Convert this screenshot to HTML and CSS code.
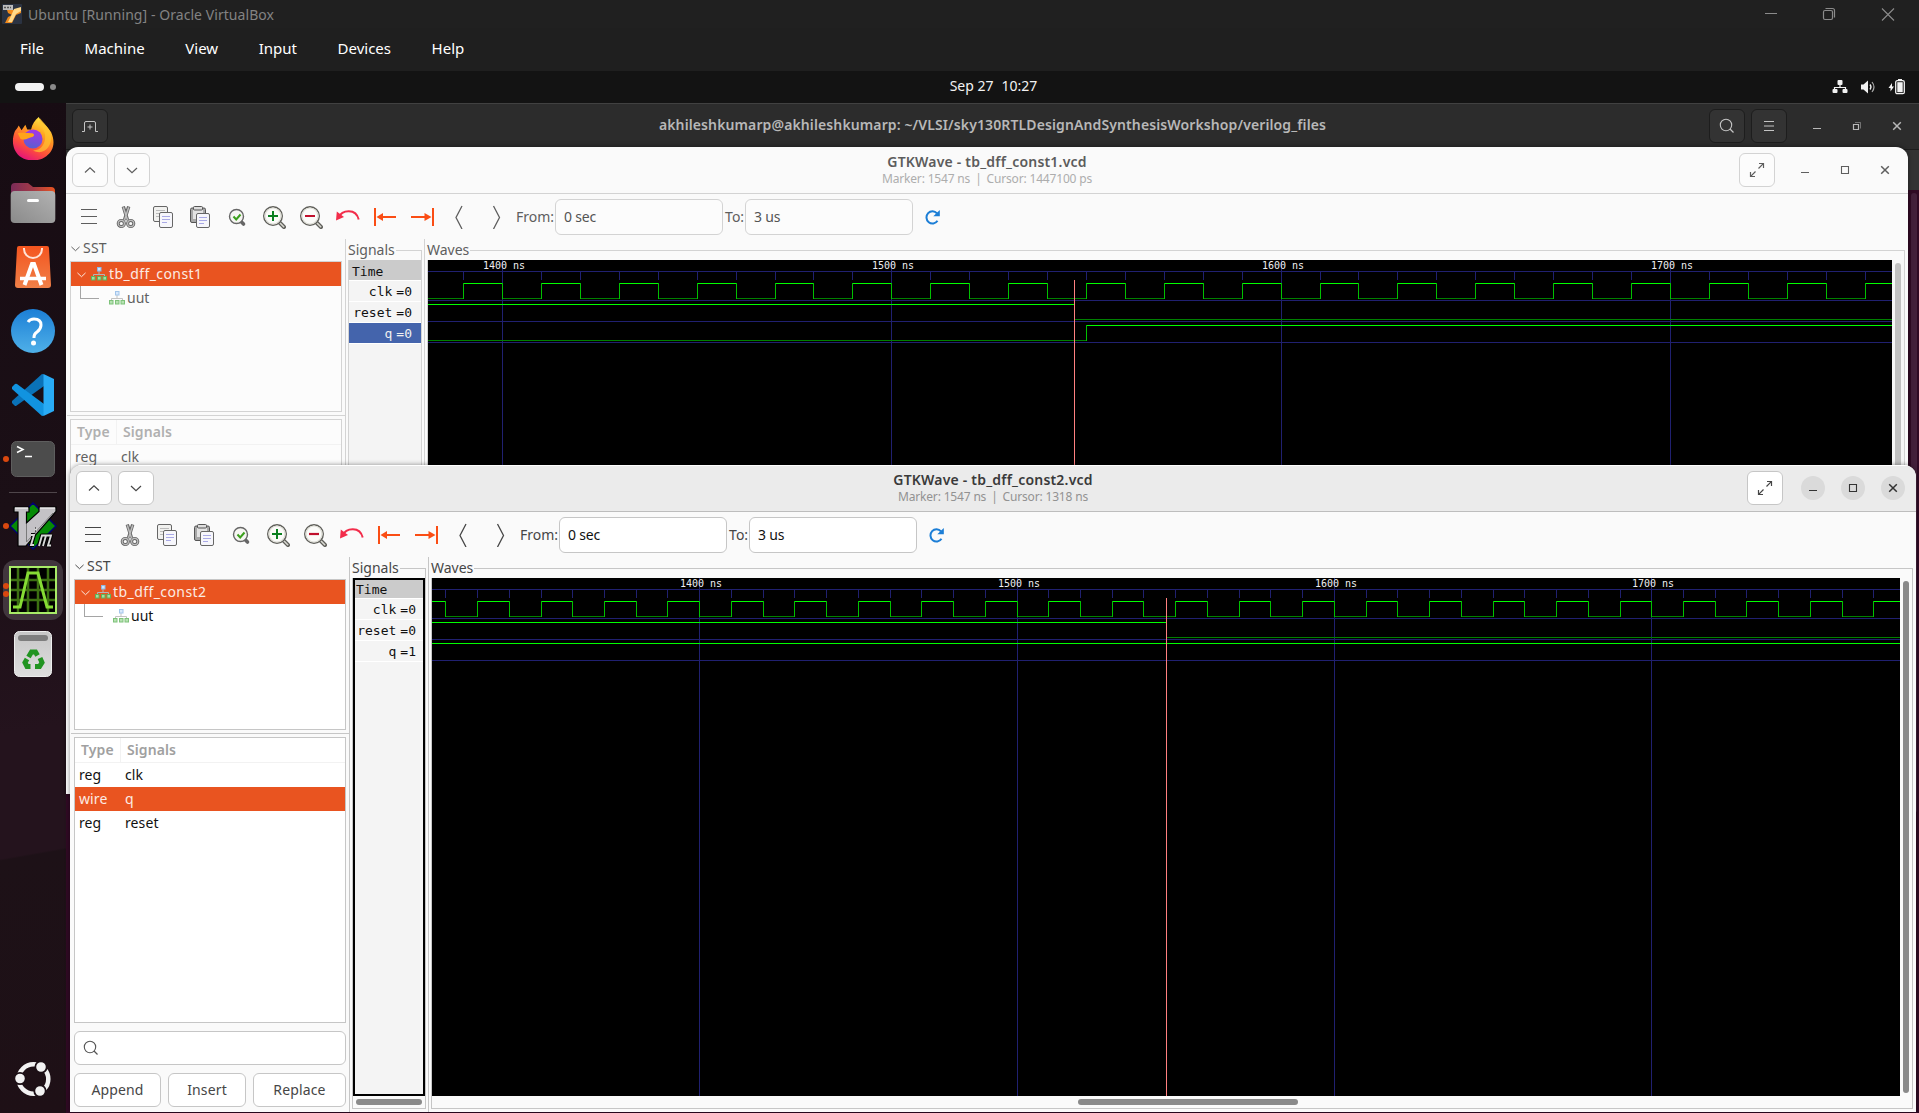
FILE: index.html
```html
<!DOCTYPE html>
<html lang="en">
<head>
<meta charset="utf-8">
<title>Ubuntu [Running] - Oracle VirtualBox</title>
<link rel="stylesheet" href="styles.css">
</head>
<body>
<svg class="defs" aria-hidden="true">
  <defs>
    <linearGradient id="ff-body" x1=".8" y1="0" x2=".3" y2="1"><stop offset="0" stop-color="#fff44f"/><stop offset=".35" stop-color="#ffa41f"/><stop offset=".7" stop-color="#ff4f3a"/><stop offset="1" stop-color="#e3127c"/></linearGradient>
    <linearGradient id="ff-globe" x1=".6" y1="0" x2=".4" y2="1"><stop offset="0" stop-color="#a634e8"/><stop offset="1" stop-color="#5a5fd0"/></linearGradient>
    <linearGradient id="folder-back" x1="0" y1="0" x2="1" y2="0"><stop offset="0" stop-color="#7b2b58"/><stop offset=".5" stop-color="#a23a48"/><stop offset="1" stop-color="#e95420"/></linearGradient>
    <linearGradient id="grey" x1="0" y1="1" x2="1" y2="0"><stop offset="0" stop-color="#8a8a8a"/><stop offset="1" stop-color="#b2b2b2"/></linearGradient>
    <linearGradient id="bag" x1="0" y1="0" x2="0" y2="1"><stop offset="0" stop-color="#f4551f"/><stop offset="1" stop-color="#f08048"/></linearGradient>
    <linearGradient id="blue" x1="0" y1="0" x2="0" y2="1"><stop offset="0" stop-color="#1c7fd6"/><stop offset="1" stop-color="#4fb0e8"/></linearGradient>
    <linearGradient id="can" x1="0" y1="0" x2="0" y2="1"><stop offset="0" stop-color="#c6c6c6"/><stop offset="1" stop-color="#dedede"/></linearGradient>
  </defs>
  <symbol id="i-up" viewBox="0 0 16 16"><path d="M3 10.500 8 5.800l5 4.700" fill="none" stroke="currentColor" stroke-width="1.200"/></symbol>
  <symbol id="i-down" viewBox="0 0 16 16"><path d="M3 6l5 4.700L13 6" fill="none" stroke="currentColor" stroke-width="1.200"/></symbol>
  <symbol id="i-expand" viewBox="0 0 16 16"><path d="M9.500 6.500 14.300 1.700M10 1.500h4.500v4.500M6.500 9.500 1.700 14.300M1.500 10v4.500h4.500" fill="none" stroke="currentColor" stroke-width="1.200"/></symbol>
  <symbol id="i-min" viewBox="0 0 16 16"><path d="M4 10.500h8" stroke="currentColor"/></symbol>
  <symbol id="i-max" viewBox="0 0 16 16"><path d="M4.500 4.500h7v7h-7z" fill="none" stroke="currentColor" stroke-width="1.100"/></symbol>
  <symbol id="i-close" viewBox="0 0 16 16"><path d="M4.200 4.200l7.600 7.600M11.800 4.200l-7.600 7.600" stroke="currentColor" stroke-width="1.500"/></symbol>
  <symbol id="i-restore" viewBox="0 0 16 16"><path d="M4.500 6.500h5v5h-5z" fill="none" stroke="currentColor" stroke-width="1.200"/><path d="M6 4.500h5.500v6" fill="none" stroke="currentColor" opacity=".5"/></symbol>
  <symbol id="i-search" viewBox="0 0 16 16"><circle cx="7" cy="7" r="5.700" fill="none" stroke="currentColor" stroke-width="1.100"/><path d="M11 11l3.500 3.500" stroke="currentColor" stroke-width="1.300"/></symbol>
  <symbol id="i-newtab" viewBox="0 0 16 16"><path d="M0 13.500h2.500V5q0-1.500 1.500-1.500h8q1.500 0 1.500 1.500v8.500H16M8 6.500v5M5.500 9h5" fill="none" stroke="currentColor"/></symbol>
  <symbol id="i-burger" viewBox="0 0 16 16"><path d="M3 3.500h10M3 8h10M3 12.500h10" stroke="currentColor" stroke-width="1.100"/></symbol>

  <symbol id="t-menu" viewBox="0 0 24 24"><path d="M4 4.500h16M4 11.500h16M4 18.500h16" stroke="currentColor" stroke-width="1.200"/></symbol>
  <symbol id="t-cut" viewBox="0 0 24 24"><g fill="none"><path d="M9.300 1.500 13.500 15M14.700 1.500 10.500 15" stroke="#666" stroke-width="3.400"/><path d="M9.300 2.300 13.500 15M14.700 2.300 10.500 15" stroke="#bdbdbd" stroke-width="1.500"/><circle cx="7.300" cy="18.500" r="3.100" stroke="#666" stroke-width="3"/><circle cx="16.700" cy="18.500" r="3.100" stroke="#666" stroke-width="3"/><circle cx="7.300" cy="18.500" r="3.100" stroke="#bdbdbd" stroke-width="1.200"/><circle cx="16.700" cy="18.500" r="3.100" stroke="#bdbdbd" stroke-width="1.200"/></g></symbol>
  <symbol id="t-copy" viewBox="0 0 24 24"><rect x="2.500" y="1.500" width="14" height="15" rx="1.500" fill="#f1f1ef" stroke="#666"/><path d="M5 5.500h9M5 8.500h4M5 11.500h3" stroke="#bbb"/><rect x="8.500" y="7.500" width="13" height="15" rx="1.500" fill="#f6f6fb" stroke="#666"/><path d="M11 11.500h8M11 14.500h8M11 17.500h5" stroke="#a9a9e6"/></symbol>
  <symbol id="t-paste" viewBox="0 0 24 24"><rect x="2.500" y="3" width="15" height="14.500" rx="1.500" fill="#a8a8a8" stroke="#555"/><rect x="5" y="5" width="10" height="9" fill="#e3e3e3"/><rect x="5.500" y="1.500" width="9" height="3.500" rx="1" fill="#ddd" stroke="#555"/><rect x="8.500" y="8.500" width="13" height="14" rx="1.500" fill="#f6f6fb" stroke="#666"/><path d="M11 12.500h8M11 15.500h8M11 18.500h5" stroke="#a9a9e6"/></symbol>
  <symbol id="t-fit" viewBox="0 0 24 24"><path d="M15.500 16 18.500 19" stroke="#666" stroke-width="3.600" stroke-linecap="round"/><circle cx="11.500" cy="11.500" r="7" fill="#f6f6f2" stroke="#666" stroke-width="1.400"/><path d="M8.500 11.500l2.700 3 4.300-5" fill="none" stroke="#3ba01c" stroke-width="2"/></symbol>
  <symbol id="t-glass" viewBox="0 0 24 24"><path d="M17.500 17.500l4.500 4.500" stroke="#5f5f5a" stroke-width="4" stroke-linecap="round"/><path d="M18 18l3.700 3.700" stroke="#d9d9d2" stroke-width="1.600" stroke-linecap="round"/><circle cx="11" cy="11" r="9.300" fill="#fbfbf9" stroke="#5f5f5a" stroke-width="1.400"/><circle cx="11" cy="11" r="8" fill="none" stroke="#deded6" stroke-width="1.200"/></symbol>
  <symbol id="t-in" viewBox="0 0 24 24"><use href="#t-glass"/><path d="M6 11h10M11 6v10" stroke="#0b8020" stroke-width="2"/></symbol>
  <symbol id="t-out" viewBox="0 0 24 24"><use href="#t-glass"/><path d="M6 11h10" stroke="#c0102c" stroke-width="2.200"/></symbol>
  <symbol id="t-undo" viewBox="0 0 24 24"><path d="M2.500 12.500C6 4.500 20 3 22.700 14.500" fill="none" stroke="#f22c4a" stroke-width="2"/><path d="M0 15.500.800 6.500 8 12z" fill="#f22c4a"/></symbol>
  <symbol id="t-first" viewBox="0 0 24 24"><path d="M2 3v18" stroke="#fa4d14" stroke-width="2"/><path d="M8 12h15" stroke="#fa4d14" stroke-width="2"/><path d="M3.500 12l6.500-4v8z" fill="#fa4d14"/></symbol>
  <symbol id="t-last" viewBox="0 0 24 24"><path d="M23 3v18" stroke="#fa4d14" stroke-width="2"/><path d="M1 12h15" stroke="#fa4d14" stroke-width="2"/><path d="M21.500 12l-7-4v8z" fill="#fa4d14"/></symbol>
  <symbol id="t-prev" viewBox="0 0 24 24"><path d="M15 1 9 12.500 15 24" fill="none" stroke="currentColor" stroke-width="1.300"/></symbol>
  <symbol id="t-next" viewBox="0 0 24 24"><path d="M9.500 1l6 11.500-6 11.500" fill="none" stroke="currentColor" stroke-width="1.300"/></symbol>
  <symbol id="t-reload" viewBox="0 0 16 16"><path d="M13 4.300A6 6.200 0 1 0 13.500 11.800" fill="none" stroke="#1c7ed6" stroke-width="2"/><path d="M15.800 1v6.300H9.300z" fill="#1c7ed6"/></symbol>
  <symbol id="i-module" viewBox="0 0 16 14"><path d="M8 4v3.500M2.500 10V7.500h11V10" fill="none" stroke="#b5b5b5"/><rect x="6.500" y=".5" width="3.500" height="3.500" fill="#cfe4fb" stroke="#8cb8e8"/><g fill="#a6dca0" stroke="#5fb45a"><rect x=".5" y="9.500" width="3.500" height="3.500"/><rect x="6.500" y="9.500" width="3.500" height="3.500"/><rect x="12" y="9.500" width="3.500" height="3.500"/></g></symbol>
</svg>

<header class="vm-title">
  <svg class="vm-logo" viewBox="0 0 20 20"><rect width="20" height="20" rx="1" fill="#2b3342"/><path d="M5 6h7l7-2v5l-5 2-4 8H3l3-6 4-2-4-2z" fill="#f08a1c"/><path d="M12 5l7-2v4l-5 3-4 8H6l3-6z" fill="#ffd98a"/><rect x="1" y="1" width="10" height="5" fill="#bcbcbc"/><path d="M2 3.500h7" stroke="#555" stroke-width="1.500" stroke-dasharray="2 1"/></svg>
  <span class="vm-name">Ubuntu [Running] - Oracle VirtualBox</span>
  <svg class="vm-controls" viewBox="0 0 132 14"><g fill="none" stroke="#8b8b8b"><path d="M1 6.500h12"/><path d="M59.500 5q0-1.500 1.500-1.500h6q1.500 0 1.500 1.500v6q0 1.500-1.500 1.500h-6q-1.500 0-1.500-1.500zM61.500 1.500h7q2 0 2 2v7" stroke-width="1.200"/><path d="M118 1.500l12 12M130 1.500l-12 12" stroke-width="1.100"/></g></svg>
</header>
<nav class="vm-menu"><span>File</span><span>Machine</span><span>View</span><span>Input</span><span>Devices</span><span>Help</span></nav>

<div class="topbar">
  <div class="workspaces"><i class="pill"></i><i class="dot"></i></div>
  <div class="clock"><span>Sep 27</span><span>10:27</span></div>
  <div class="tray">
    <svg width="16" height="16" viewBox="0 0 16 16"><path d="M8 5v4M2.500 11V8.500h11V11" fill="none" stroke="#f2f2f2" stroke-width="1.200"/><g fill="#f2f2f2"><rect x="5.500" y="1" width="5" height="5" rx="1"/><rect x=".5" y="10" width="5" height="4" rx="1"/><rect x="10.500" y="10" width="5" height="4" rx="1"/></g></svg>
    <svg width="16" height="16" viewBox="0 0 16 16"><path d="M1 5.500h2.500L8 1.500v13L3.500 10.500H1z" fill="#f2f2f2"/><path d="M10 5.500q2 2.500 0 5" fill="none" stroke="#f2f2f2" stroke-width="1.300"/><path d="M12 3q4 5 0 10" fill="none" stroke="#aaa" stroke-width="1.200"/></svg>
    <svg width="17" height="16" viewBox="0 0 17 16"><path d="M4 4 .5 9H2.500v3.500L6 7.500H4z" fill="#f2f2f2"/><rect x="7.700" y="1.700" width="8.600" height="13" rx="1.500" fill="none" stroke="#f2f2f2" stroke-width="1.300"/><rect x="9.300" y="3.200" width="5.400" height="10" fill="#f2f2f2"/><path d="M10 .6h4" stroke="#f2f2f2" stroke-width="1.300"/></svg>
  </div>
</div>

<main class="desktop">
  <aside class="dock">
    <div class="slot"><svg class="firefox" width="42" height="44" viewBox="0 0 44 46"><path d="M28 1c2 5 9 9 13 16 5 11 2 20-5 25-8 6-20 6-28 0C1 36-1 26 3 16c1-2 3-3 4-6l3 5 4-6 2 5h4c1-5 4-10 8-13z" fill="url(#ff-body)"/><circle cx="22" cy="24" r="10" fill="url(#ff-globe)"/><path d="M6 18c6-1 9 0 14 0 4 0 4 3 1 4-5 1-6 4-12 2z" fill="#ffa31a"/><path d="M29 8c5 6 7 12 5 19-2 6-6 9-12 9 11 6 20-4 19-15-1-8-8-14-12-19z" fill="#ffc530" opacity=".7"/></svg></div>
    <div class="slot"><svg width="46" height="42" viewBox="0 0 46 42"><path d="M1 5q0-4 4-4h13l5 4h18q4 0 4 4v12H1z" fill="url(#folder-back)"/><rect x=".7" y="9" width="44.600" height="32" rx="4" fill="url(#grey)"/><rect x="17" y="17" width="12" height="3" rx="1.500" fill="#fff"/></svg></div>
    <div class="slot"><svg width="36" height="44" viewBox="0 0 36 44"><path d="M4 1h28q2 0 2 2l2 37q0 3-3 3H3q-3 0-3-3L2 3q0-2 2-2z" fill="url(#bag)"/><path d="M9 3v1a9 9 0 0 0 18 0V3" fill="none" stroke="#ffe3d6" stroke-width="2"/><path d="M9.500 40 17 19h2l7.500 21" fill="none" stroke="#fff" stroke-width="4"/><path d="M5 33.500h26" stroke="#fff" stroke-width="3.500"/></svg></div>
    <div class="slot"><svg width="44" height="44" viewBox="0 0 44 44"><circle cx="22" cy="22" r="22" fill="url(#blue)"/><path d="M17 13q2-3 6-3 7 0 7 6 0 4-4 7-3 2-3 5v1" fill="none" stroke="#fff" stroke-width="3"/><circle cx="22.500" cy="34" r="2.500" fill="#fff"/></svg></div>
    <div class="slot"><svg width="42" height="42" viewBox="0 0 42 42"><path d="M0 27 30 0l2 .5V12L4 32q-1 0-1.500-.5L0 29z" fill="#0a72b8"/><path d="M0 15v-2l3-3q1-.7 2 0L32 30v11.500L30 42z" fill="#1193e0"/><path d="M31.500 0 42 5v32l-10.500 5z" fill="#29abf5"/></svg></div>
    <div class="slot run1"><svg width="44" height="36" viewBox="0 0 44 36"><rect x=".5" y=".5" width="43" height="35" rx="5" fill="#4c4c4c" stroke="#5e5e5e"/><path d="M6 5.500l6 3-6 3M14 15.500h7" fill="none" stroke="#fff" stroke-width="1.500"/></svg></div>
    <hr class="dock-line">
    <div class="slot run1"><svg width="48" height="48" viewBox="0 0 48 48"><path d="M24 1 47 24 24 47 1 24z" fill="#058a05" stroke="#000072" stroke-width="1.500"/><path d="M5 5h15v5h-2.500v11L30 9.500V5h17v4.500L17 44H9V10H5z" fill="#c4c2c6" stroke="#000" stroke-width="1.200"/><path d="M6 6h13M31 6h15" stroke="#fff"/><path d="M17.500 22v18L44 11" fill="none" stroke="#7a7a7a" stroke-width="1"/><g fill="none" stroke="#000" stroke-width="4.200" stroke-linejoin="round"><path d="M22 33h3l-3 10h3M26 27.500h1M30 43.500l3-10h4l-3 10M37 33.500h5l-3 10h3"/></g><g fill="none" stroke="#d8d8d8" stroke-width="1.900"><path d="M22 33h3l-3 10h3M25.500 27.500h2.500M30 44l3-10.500h4L34 44M37 33.500h5l-3 10h3"/></g></svg></div>
    <div class="slot run2"><div class="tile"><svg width="48" height="48" viewBox="0 0 48 48"><rect width="48" height="48" fill="#a8ea68"/><rect x="2" y="2" width="44" height="44" fill="#000"/><path d="M9 2v44M19 2v44M29 2v44M39 2v44M2 14h44M2 24h44M2 34h44" stroke="#3c7012" stroke-width="2.500"/><path d="M4 41h7l8-34h10l9 34h6" fill="none" stroke="#86dc34" stroke-width="3"/></svg></div></div>
    <div class="slot"><svg width="38" height="46" viewBox="0 0 38 46"><rect x=".5" y=".5" width="37" height="45" rx="5" fill="url(#can)" stroke="#eee"/><rect x="4" y="4" width="30" height="6" rx="3" fill="#7e7e7e"/><g fill="none" stroke="#219421" stroke-width="5"><path d="M14.500 26l3-5h4l2 3.500"/><path d="M26 27l2 4.500-2.500 4H21"/><path d="M16.500 35.500h-3.500l-2-4 2-3.500"/></g></svg></div>
    <div class="slot launcher"><svg width="36" height="36" viewBox="0 0 36 36"><circle cx="18.500" cy="18" r="14.800" fill="none" stroke="#f2f2f2" stroke-width="4.500"/><g fill="#f2f2f2" stroke="#1c1016" stroke-width="1.800"><circle cx="5" cy="17.500" r="5.700"/><circle cx="26" cy="6" r="5.700"/><circle cx="25" cy="30" r="5.700"/></g></svg></div>
  </aside>

  <section class="terminal">
    <header class="term-head">
      <div class="side"><button class="tbtn"><svg><use href="#i-newtab"/></svg></button></div>
      <h1>akhileshkumarp@akhileshkumarp: ~/VLSI/sky130RTLDesignAndSynthesisWorkshop/verilog_files</h1>
      <div class="side end"><button class="tbtn"><svg><use href="#i-search"/></svg></button><button class="tbtn"><svg><use href="#i-burger"/></svg></button><span class="wc"><svg><use href="#i-min"/></svg></span><span class="wc"><svg><use href="#i-restore"/></svg></span><span class="wc"><svg><use href="#i-close"/></svg></span></div>
    </header>
    <div class="term-tabs"></div>
    <div class="term-body"><i class="term-scroll"></i></div>
  </section>

  <section class="win win-a">
    <header class="win-head">
      <div class="side"><button class="hbtn"><svg><use href="#i-up"/></svg></button><button class="hbtn"><svg><use href="#i-down"/></svg></button></div>
      <div class="titles"><h2>GTKWave - tb_dff_const1.vcd</h2><p>Marker: 1547 ns <i>|</i> Cursor: 1447100 ps</p></div>
      <div class="side end"><button class="hbtn"><svg><use href="#i-expand"/></svg></button><span class="wc"><svg><use href="#i-min"/></svg></span><span class="wc"><svg><use href="#i-max"/></svg></span><span class="wc"><svg><use href="#i-close"/></svg></span></div>
    </header>
    <div class="toolbar">
      <svg><use href="#t-menu"/></svg><svg><use href="#t-cut"/></svg><svg><use href="#t-copy"/></svg><svg><use href="#t-paste"/></svg><svg><use href="#t-fit"/></svg><svg><use href="#t-in"/></svg><svg><use href="#t-out"/></svg><svg><use href="#t-undo"/></svg><svg><use href="#t-first"/></svg><svg><use href="#t-last"/></svg><svg><use href="#t-prev"/></svg><svg><use href="#t-next"/></svg>
      <label class="from">From:</label><div class="entry">0 sec</div><label class="to">To:</label><div class="entry">3 us</div><svg class="reload"><use href="#t-reload"/></svg>
    </div>
    <div class="panes">
      <div class="left">
        <div class="sst"><svg><use href="#i-down"/></svg>SST</div>
        <div class="tree">
          <div class="node sel"><svg class="tw"><use href="#i-down"/></svg><svg class="mod"><use href="#i-module"/></svg>tb_dff_const1</div>
          <div class="node child"><i class="elbow"></i><svg class="mod"><use href="#i-module"/></svg>uut</div>
        </div>
        <hr class="split">
        <div class="list">
          <div class="lh"><b>Type</b><b>Signals</b></div>
          <div class="lr"><span>reg</span><span>clk</span></div>
        </div>
      </div>
      <div class="frame signals">
        <div class="legend"><span>Signals</span><i></i></div>
        <div class="fbody">
          <div class="names">
            <div class="time">Time</div>
            <div class="sig"><span>clk</span><span>=0</span></div>
            <div class="sig"><span>reset</span><span>=0</span></div>
            <div class="sig on"><span>q</span><span>=0</span></div>
          </div>
        </div>
      </div>
      <div class="frame waves">
        <div class="legend"><span>Waves</span><i></i></div>
        <div class="fbody"><svg class="plot" id="plot1" width="1464" height="518"></svg><div class="vbar"><i></i></div></div>
      </div>
    </div>
  </section>

  <section class="win win-b">
    <header class="win-head">
      <div class="side"><button class="hbtn"><svg><use href="#i-up"/></svg></button><button class="hbtn"><svg><use href="#i-down"/></svg></button></div>
      <div class="titles"><h2>GTKWave - tb_dff_const2.vcd</h2><p>Marker: 1547 ns <i>|</i> Cursor: 1318 ns</p></div>
      <div class="side end"><button class="hbtn"><svg><use href="#i-expand"/></svg></button><span class="wc"><svg><use href="#i-min"/></svg></span><span class="wc"><svg><use href="#i-max"/></svg></span><span class="wc"><svg><use href="#i-close"/></svg></span></div>
    </header>
    <div class="toolbar">
      <svg><use href="#t-menu"/></svg><svg><use href="#t-cut"/></svg><svg><use href="#t-copy"/></svg><svg><use href="#t-paste"/></svg><svg><use href="#t-fit"/></svg><svg><use href="#t-in"/></svg><svg><use href="#t-out"/></svg><svg><use href="#t-undo"/></svg><svg><use href="#t-first"/></svg><svg><use href="#t-last"/></svg><svg><use href="#t-prev"/></svg><svg><use href="#t-next"/></svg>
      <label class="from">From:</label><div class="entry">0 sec</div><label class="to">To:</label><div class="entry">3 us</div><svg class="reload"><use href="#t-reload"/></svg>
    </div>
    <div class="panes">
      <div class="left">
        <div class="sst"><svg><use href="#i-down"/></svg>SST</div>
        <div class="tree">
          <div class="node sel"><svg class="tw"><use href="#i-down"/></svg><svg class="mod"><use href="#i-module"/></svg>tb_dff_const2</div>
          <div class="node child"><i class="elbow"></i><svg class="mod"><use href="#i-module"/></svg>uut</div>
        </div>
        <hr class="split">
        <div class="list">
          <div class="lh"><b>Type</b><b>Signals</b></div>
          <div class="lr"><span>reg</span><span>clk</span></div>
          <div class="lr sel"><span>wire</span><span>q</span></div>
          <div class="lr"><span>reg</span><span>reset</span></div>
        </div>
        <div class="find"><svg><use href="#i-search"/></svg></div>
        <div class="actions"><button>Append</button><button>Insert</button><button>Replace</button></div>
      </div>
      <div class="frame signals">
        <div class="legend"><span>Signals</span><i></i></div>
        <div class="fbody">
          <div class="names focus">
            <div class="time">Time</div>
            <div class="sig"><span>clk</span><span>=0</span></div>
            <div class="sig"><span>reset</span><span>=0</span></div>
            <div class="sig"><span>q</span><span>=1</span></div>
          </div>
          <div class="hbar"><i></i></div>
        </div>
      </div>
      <div class="frame waves">
        <div class="legend"><span>Waves</span><i></i></div>
        <div class="fbody"><svg class="plot" id="plot2" width="1468" height="518"></svg><div class="vbar"><i></i></div><div class="hbar"><i></i></div></div>
      </div>
    </div>
  </section>
</main>
<script src="waves.js"></script>
</body>
</html>
```
FILE: waves.js
```js
// Draws the time ruler, grid and the three traces of a waveform pane.
// x1400 is the pixel column of 1400 ns, scale is pixels per nanosecond.
function drawWaves(id, x1400, scale, qRise) {
  const svg = document.getElementById(id);
  const width = +svg.getAttribute('width');
  const height = +svg.getAttribute('height');
  const at = ns => Math.floor(x1400 + (ns - 1400) * scale) + 0.5;
  const clip = x => Math.max(0, Math.min(width, x));
  const paths = { grid: '', low: '', high: '', edge: '', mark: '' };
  const h = (kind, x0, x1, y) => { paths[kind] += `M${clip(x0)} ${y + 0.5}H${clip(x1)}`; };
  const v = (kind, x, y0, y1) => { if (x > 0 && x < width) paths[kind] += `M${x} ${y0}V${y1}`; };

  [11, 40, 61, 82].forEach(y => h('grid', 0, width, y));
  for (let ns = 1300; ns < 1800; ns += 10) {
    const x = at(ns);
    if (ns % 100 === 0) v('grid', x, 0, height);
    else v('grid', x, 12, 20);
    const high = (ns / 10) % 2 === 1;
    if (at(ns + 10) > 0 && x < width) h(high ? 'high' : 'low', x, at(ns + 10), high ? 23 : 38);
    v('edge', x, 23, 39);
  }
  const marker = at(1547);
  h('high', 0, marker, 44);
  h('low', marker, width, 59);
  if (qRise) {
    h('low', 0, at(qRise), 80);
    v('edge', at(qRise), 65, 81);
    h('high', at(qRise), width, 65);
  } else {
    h('high', 0, width, 65);
  }
  v('mark', marker, 20, height);

  let out = Object.keys(paths).map(k => `<path class="${k}" d="${paths[k]}"/>`).join('');
  for (let ns = 1400; ns <= 1700; ns += 100) {
    out += `<text x="${at(ns) - 19.5}" y="9">${ns} ns</text>`;
  }
  svg.innerHTML = out;
}
drawWaves('plot1', 74.5, 3.893, 1550);
drawWaves('plot2', 267.7, 3.1735, 0);
```
FILE: styles.css
```css
* { box-sizing: border-box; }
body { margin: 0; width: 1919px; height: 1113px; overflow: hidden; background: #1f1f1f; font: 14px/20px "Noto Sans", "Open Sans", sans-serif; display: flex; flex-direction: column; }
.defs { position: absolute; width: 0; height: 0; }
h1, h2, p, hr { margin: 0; border: 0; }
button { font: inherit; padding: 0; }
svg { flex: none; display: block; }

.vm-title { height: 28px; background: #202020; display: flex; align-items: center; padding-left: 2px; color: #838383; }
.vm-logo { width: 20px; height: 20px; }
.vm-name { margin-left: 6px; letter-spacing: .06px; flex: 1; padding-top: 1px; }
.vm-controls { width: 132px; height: 14px; margin-right: 23px; }
.vm-menu { height: 43px; background: #1f1f1f; color: #fff; font-size: 15px; display: flex; gap: 40.600px; padding: 10px 0 0 20px; }

.topbar { height: 32px; background: #131313; display: grid; grid-template-columns: 1fr auto 1fr; align-items: center; color: #f2f2f2; padding: 0 14px 0 15px; flex: none; }
.workspaces { display: flex; align-items: center; gap: 6px; }
.pill { width: 29px; height: 8px; border-radius: 4px; background: #f2f2f2; }
.dot { width: 6px; height: 6px; border-radius: 3px; background: #8a8a8a; }
.clock { display: flex; gap: 8px; padding-left: 67px; padding-bottom: 2px; }
.tray { display: flex; gap: 12px; justify-content: flex-end; }

.desktop { flex: 1; position: relative; display: flex; background: #300a24; min-height: 0; }
.dock { width: 66px; background: linear-gradient(170deg, #170c13 0, #1b0f16 40%, #24131d 62%, #24131d 74%, #1d1117 74.200%, #1e1016 100%); display: flex; flex-direction: column; padding-top: 4px; }
.slot { height: 64px; display: flex; align-items: center; justify-content: center; flex: none; position: relative; }
.firefox { margin-bottom: 2px; }
.run1::before, .run2::before, .run2::after { content: ""; position: absolute; left: 3px; top: 29px; width: 6px; height: 6px; border-radius: 3px; background: #d9480f; }
.run2::before { top: 25px; z-index: 1; }
.run2::after { top: 33px; }
.dock-line { width: 48px; height: 1px; background: #4f464b; margin: 1px auto 1px; }
.tile { width: 60px; height: 60px; border-radius: 12px; background: #41363d; display: flex; align-items: center; justify-content: center; }
.launcher { margin-top: auto; margin-bottom: 2px; }

.terminal { flex: 1; display: flex; flex-direction: column; }
.term-head { height: 46px; border-top: 1px solid #414141; background: #2c2c2c; display: grid; grid-template-columns: 1fr auto 1fr; align-items: center; color: #b8b8b8; padding: 0 10px 1px 6px; }
.term-head h1 { font-size: 14px; line-height: 20px; font-weight: 600; letter-spacing: .115px; padding: 0 0 2px 4px; }
.side { display: flex; gap: 6px; align-items: center; }
.end { justify-content: flex-end; }
.side svg { width: 16px; height: 16px; }
.tbtn { width: 36px; height: 34px; border: 1px solid #1d1d1d; border-radius: 6px; background: #333; color: #c4c4c4; display: grid; place-items: center; }
.wc { width: 24px; height: 24px; border-radius: 12px; display: grid; place-items: center; margin-left: 10px; }
.tbtn + .wc, .hbtn + .wc { margin-left: 12px; }
.term-tabs { height: 41px; background: #333; border-top: 1px solid #1c1c1c; }
.term-body { flex: 1; background: #300a24; display: flex; justify-content: flex-end; padding: 3px 2px 300px; }
.term-scroll { width: 6px; border-radius: 3px; background: #43203a; }

.win { position: absolute; height: 647px; background: #fafafa; border-radius: 12px 12px 0 0; display: flex; flex-direction: column; box-shadow: 0 0 5px rgba(0, 0, 0, .45); overflow: hidden; }
.win-a { left: 66px; top: 44px; width: 1842px; --line: #d3d3d3; --fg: #5e5e5e; --name: #626262; --sub: #adadad; --box: #fcfcfc; --entry: #545454; --thumb: #c0c0c0; color: var(--fg); }
.win-b { left: 70px; top: 362px; width: 1846px; --line: #c6c6c6; --fg: #464646; --name: #111; --sub: #929292; --box: #fff; --entry: #111; --thumb: #8a8a8a; color: var(--fg); }
.win-head { height: 47px; border-bottom: 1px solid var(--line); display: grid; grid-template-columns: 1fr auto 1fr; align-items: center; padding: 0 11px 0 6px; flex: none; }
.win-b .win-head { background: #ebebeb; box-shadow: inset 0 1px #fff; border-color: #bdbdbd; }
.win-head .wc { margin-left: 10px; }
.win-head .hbtn + .wc { margin-left: 12px; }
.win-b .wc { background: #dadada; color: #333; }
.hbtn { width: 36px; height: 34px; border: 1px solid var(--line); border-radius: 6px; background: var(--box); color: inherit; display: grid; place-items: center; }
.titles { text-align: center; padding: 0 0 3px 5px; color: var(--fg); }
.win-a h2 { color: #5c5c5c; }
.win-b h2 { color: #3a3a3a; }
.titles h2 { font-size: 14px; line-height: 19px; font-weight: 600; letter-spacing: .2px; }
.titles p { font-size: 12px; line-height: 15px; letter-spacing: -.17px; color: var(--sub); }
.titles i { font-style: normal; margin: 0 2px; }

.toolbar { height: 45px; flex: none; display: flex; align-items: center; padding: 1px 0 0 4px; }
.toolbar svg { width: 24px; height: 24px; margin: 0 6.500px; }
.from { margin: 0 1px 0 2px; }
.to { margin: 0 2px; width: 18px; white-space: nowrap; }
.entry { width: 168px; height: 36px; border: 1px solid var(--line); border-radius: 6px; background: var(--box); color: var(--entry); padding: 7px 8px; letter-spacing: -.2px; }
.toolbar .reload { width: 16px; height: 16px; margin-left: 11px; }

.panes { flex: 1; display: flex; min-height: 0; }
.left { width: 280px; border-right: 1px solid var(--line); padding: 0 3px 0 4px; flex: none; }
.sst { height: 22px; line-height: 18px; display: flex; gap: 2px; letter-spacing: .2px; }
.sst svg { width: 13px; height: 13px; margin: 3px -1px 0 -1px; }
.tree { width: 272px; height: 151px; border: 1px solid var(--line); background: var(--box); }
.node { height: 24px; line-height: 24px; display: flex; align-items: center; letter-spacing: .42px; color: var(--name); }
.sel { background: #e95420; color: #fcebe4; }
.node.sel { padding-left: 4px; color: #fcebe4; }
.tw { width: 13px; height: 13px; margin-right: 3px; }
.mod { width: 16px; height: 14px; margin-right: 2px; }
.child { padding-left: 9px; letter-spacing: 0; }
.child .mod { opacity: .8; }
.elbow { width: 19px; height: 13px; border: solid #a5a5a5; border-width: 0 0 1px 1px; margin: -12px 10px 0 0; }
.split { height: 1px; background: var(--line); margin: 3px -3px 3px -3px; }
.list { width: 272px; height: 286px; border: 1px solid var(--line); background: var(--box); }
.lh, .lr { display: flex; line-height: 24px; height: 24px; }
.lh { color: #a0a0a0; height: 25px; border-bottom: 1px solid #f2f2f2; }
.win-a .lh { color: #b0b0b0; }
.lh b { font-weight: 600; padding-left: 6px; letter-spacing: .1px; }
.lh b:first-child { width: 46px; border-right: 1px solid #f2f2f2; }
.lr span { padding-left: 4px; color: var(--name); letter-spacing: .1px; }
.lr.sel span { color: #fcebe4; }
.lr span:first-child { width: 46px; }
.find { height: 34px; width: 272px; margin-top: 8px; border: 1px solid var(--line); border-radius: 6px; background: #fff; padding: 8px; color: #555; }
.find svg { width: 16px; height: 16px; }
.actions { margin-top: 8px; display: grid; grid-template-columns: 87px 78px 93px; gap: 7px; }
.actions button { height: 34px; border: 1px solid var(--line); border-radius: 6px; background: #fff; color: #464646; letter-spacing: .15px; }

.frame { display: flex; flex-direction: column; height: 552px; margin-left: 2px; }
.signals { width: 74px; flex: none; }
.waves { flex: 1; margin: 0 3px 0 5px; position: relative; }
.waves::before { content: ""; position: absolute; left: -3px; top: 0; width: 1px; height: 555px; background: var(--line); }
.legend { height: 21px; display: flex; line-height: 21px; flex: none; }
.legend i { flex: 1; height: 10px; margin: 11px 0 0 1px; border: solid var(--line); border-width: 1px 1px 0 0; }
.fbody { flex: 1; border: solid var(--line); border-width: 0 1px 1px; display: flex; flex-wrap: wrap; align-content: flex-start; }
.names { width: 72px; height: 518px; background: #f4f4f4; font: 13px/20px "DejaVu Sans Mono", monospace; color: #111; position: relative; }
.time { height: 21px; background: #cbcbcb; border-bottom: 1px solid #fff; padding: 2px 0 0 3px; }
.sig { height: 21px; border-bottom: 1px solid #fff; display: flex; justify-content: flex-end; gap: 4px; padding: 1px 9px 0 0; }
.sig.on { background: #4464ac; color: #f0f0f0; }
.focus::after { content: ""; position: absolute; inset: 0; border: 2px solid #000; }
.plot { background: #000; shape-rendering: crispEdges; }
.plot path { fill: none; stroke-width: 1; }
.plot .grid { stroke: #202070; }
.plot .low { stroke: #008000; }
.plot .high { stroke: #00ff00; }
.plot .edge { stroke: #00c000; }
.plot .mark { stroke: #ff8080; }
.plot text { font: 10px "DejaVu Sans Mono", monospace; fill: #f0f0f0; }
.vbar { width: 12px; height: 518px; padding: 3px 3px; display: flex; }
.win-a .vbar { background: #f6f6f6; }
.vbar i { width: 6px; height: 512px; border-radius: 3px; background: var(--thumb); }
.hbar { height: 12px; width: 100%; padding: 3px; }
.hbar i { display: block; height: 6px; border-radius: 3px; background: var(--thumb); }
.waves .hbar { padding-left: 646px; }
.waves .hbar i { width: 220px; }
```
